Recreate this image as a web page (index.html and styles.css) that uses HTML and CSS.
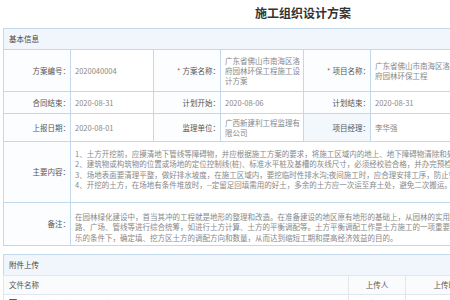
FILE: index.html
```html
<!DOCTYPE html>
<html lang="zh-CN">
<head>
    <meta charset="UTF-8">
    <title>施工组织设计方案</title>
    <link rel="stylesheet" href="styles.css">
</head>
<body>
<div class="page">
    <h1 class="title">施工组织设计方案</h1>

    <div class="panel">
        <div class="panel-hd">基本信息</div>
        <table class="info">
            <colgroup>
                <col class="c-lb"><col class="c-val">
                <col class="c-lb"><col class="c-val">
                <col class="c-lb"><col class="c-val">
                <col class="c-lb"><col class="c-val">
            </colgroup>
            <tr class="r1">
                <th>方案编号：</th>
                <td>2020040004</td>
                <th><i class="req">*</i>方案名称：</th>
                <td>广东省佛山市南海区洛府园林环保工程施工设计方案</td>
                <th><i class="req">*</i>项目名称：</th>
                <td>广东省佛山市南海区洛府园林环保工程</td>
                <th>合同编号：</th>
                <td>HT-2020-0412</td>
            </tr>
            <tr class="r2">
                <th>合同结束：</th>
                <td>2020-08-31</td>
                <th>计划开始：</th>
                <td>2020-08-06</td>
                <th>计划结束：</th>
                <td>2020-08-31</td>
                <th>编制人：</th>
                <td>胡雷</td>
            </tr>
            <tr class="r3">
                <th>上报日期：</th>
                <td>2020-08-01</td>
                <th>监理单位：</th>
                <td>广西新建利工程监理有限公司</td>
                <th class="hover">项目经理：</th>
                <td>李华强</td>
                <th>联系电话：</th>
                <td>13807712345</td>
            </tr>
            <tr class="r4">
                <th>主要内容：</th>
                <td colspan="7" class="long">
                    <p>1、土方开挖前，应摸清地下管线等障碍物，并应根据施工方案的要求，将施工区域内的地上、地下障碍物清除和处理完毕。</p>
                    <p>2、建筑物或构筑物的位置或场地的定位控制线(桩)、标准水平桩及基槽的灰线尺寸，必须经校验合格，并办完预检手续。</p>
                    <p>3、场地表面要清理平整，做好排水坡度，在施工区域内，要挖临时性排水沟;夜间施工时，应合理安排工序，防止错挖或超挖。</p>
                    <p>4、开挖的土方，在场地有条件堆放时，--定留足回填需用的好土，多余的土方应一次运至弃土处，避免二次搬运。</p>
                </td>
            </tr>
            <tr class="r5">
                <th>备注：</th>
                <td colspan="7" class="long">
                    <p>在园林绿化建设中，首当其冲的工程就是地形的整理和改造。在准备建设的地区原有地形的基础上，从园林的实用功能出发，对园林地形、园</p>
                    <p>路、广场、管线等进行综合统筹，如进行土方计算、土方的平衡调配等。土方平衡调配工作是土方施工的一项重要内容，其目的是在土方运输量最</p>
                    <p>乐的条件下，确定填、挖方区土方的调配方向和数量，从而达到缩短工期和提高经济效益的目的。</p>
                </td>
            </tr>
        </table>
    </div>

    <div class="panel files-panel">
        <div class="panel-hd">附件上传</div>
        <table class="files">
            <colgroup>
                <col class="f-name"><col class="f-user"><col class="f-time"><col class="f-op">
            </colgroup>
            <tr>
                <th class="name">文件名称</th>
                <th>上传人</th>
                <th>上传时间</th>
                <th>操作</th>
            </tr>
            <tr>
                <td class="name">
                    <svg class="doc" width="8" height="9" viewBox="0 0 8 9">
                        <rect x="0" y="0" width="8" height="9" rx="1" fill="#2b5fb4"/>
                        <rect x="1.5" y="2" width="5" height="1" fill="#fff"/>
                        <rect x="1.5" y="4" width="5" height="1" fill="#fff"/>
                        <rect x="1.5" y="6" width="3.5" height="1" fill="#fff"/>
                    </svg>
                    广东省佛山市南海区洛府园林环保工程.docx
                </td>
                <td>胡雷</td>
                <td>2020-04-20 10:25:36</td>
                <td>下载</td>
            </tr>
        </table>
    </div>
</div>
</body>
</html>
```

FILE: styles.css
```css
body {
    margin: 0;
    background: #fff;
    font-family: "Noto Sans CJK SC", "Noto Sans", sans-serif;
    font-size: 7.5px;
    color: #888;
}
p {
    margin: 0;
}
.page {
    width: 600px;
    padding: 5px 3px 0;
}
.title {
    margin: 0 0 7px;
    text-align: center;
    font-size: 12px;
    line-height: 16px;
    font-weight: bold;
    color: #333;
}
.panel-hd {
    height: 20px;
    line-height: 20px;
    padding-left: 5px;
    background: #f0f6fc;
    border: 1px solid #c4d8eb;
    border-bottom: 0;
    color: #444;
}
table {
    width: 100%;
    border-collapse: collapse;
    table-layout: fixed;
}
.c-lb {
    width: 67px;
}
.c-val {
    width: 83px;
}
.info th,
.info td {
    border: 1px solid #c4d8eb;
    padding: 0 3px 0 4px;
    line-height: 10px;
    vertical-align: middle;
    text-align: left;
}
.info th {
    padding: 0 0 0 3px;
    text-align: right;
    font-weight: normal;
    color: #555;
    background: #fcfdff;
}
.info th.hover {
    background: #f3f8fd;
}
.req {
    font-style: normal;
    color: #e4393c;
    margin-right: 2px;
}
.r1 th, .r1 td {
    height: 41px;
}
.r2 th, .r2 td {
    height: 21px;
}
.r3 th, .r3 td {
    height: 27px;
}
.r4 th {
    height: 60px;
}
.r5 th {
    height: 42px;
}
.info td.long {
    white-space: nowrap;
    overflow: hidden;
    vertical-align: top;
    line-height: 10.3px;
}
.r4 td.long {
    height: 53px;
    padding-top: 7px;
}
.r5 td.long {
    height: 33px;
    padding-top: 9px;
}
.files-panel {
    margin-top: 8px;
}
.f-name {
    width: 345px;
}
.f-user {
    width: 57px;
}
.f-time {
    width: 86px;
}
.files th,
.files td {
    border: 1px solid #e1e7ee;
    height: 18px;
    line-height: 10px;
    padding: 0 4px;
    text-align: center;
    font-weight: normal;
    color: #555;
}
.files th {
    background: #fafbfc;
}
.files .name {
    text-align: left;
    padding-left: 5px;
}
.files td.name {
    color: #444;
}
.doc {
    vertical-align: -1px;
    margin-right: 10px;
}
```
